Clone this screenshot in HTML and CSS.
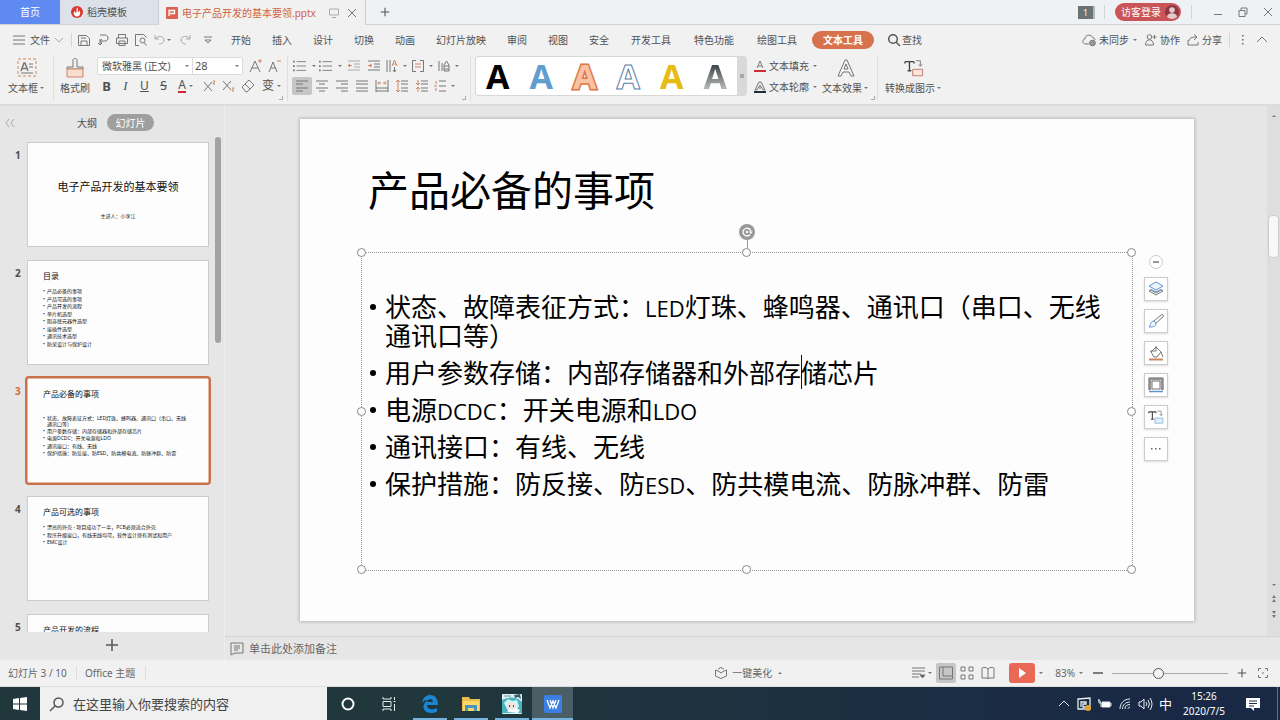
FILE: index.html
```html
<!DOCTYPE html>
<html lang="zh-CN">
<head>
<meta charset="utf-8">
<title>电子产品开发的基本要领.pptx</title>
<link rel="stylesheet" href="styles.css">
</head>
<body>
<svg class="defs" aria-hidden="true">
  <symbol id="caret" viewBox="0 0 6 4"><path d="M1 1h4L3 3z" fill="#777"/></symbol>
  <symbol id="x" viewBox="0 0 10 10"><path d="M1 1l8 8M9 1L1 9"/></symbol>
  <symbol id="plus" viewBox="0 0 14 14"><path d="M7 1v12M1 7h12"/></symbol>
  <symbol id="bullets" viewBox="0 0 16 14"><path d="M4 2h11M4 7h11M4 12h11"/><path d="M0 2h2M0 7h2M0 12h2" stroke-width="2"/></symbol>
  <symbol id="texttool" viewBox="0 0 22 20"><path d="M1 3h10M6 3v10M1 5V3M11 5V3M4 13h4" stroke="#444" stroke-width="1.500"/><path d="M13 2h5v6M16 6l2 2 2-2"/><path class="accent" d="M9.500 11.500h11v7h-11z"/></symbol>
</svg>
<div class="app">
  <header class="tabs">
    <button class="tab tab-home">首页</button>
    <button class="tab tab-docer"><svg class="i12" viewBox="0 0 12 12"><circle cx="6" cy="6" r="6" fill="#d93a2b"/><path d="M6 1.500c2 2 0 3.500 1 4.500 1 0 1-1 1-2 3 4-0 6.500-2 6.500C2 10 2 6 4 5c0 1 0 1.500 1 2 1-1-0-3 1-5.500z" fill="#fff"/></svg>稻壳模板</button>
    <div class="tab tab-file"><svg class="i12" viewBox="0 0 12 12"><rect width="12" height="12" rx="1" fill="#dd6350"/><path d="M3 9V3.500h5.500v3H4" fill="none" stroke="#fff" stroke-width="1.300"/></svg><span class="filename">电子产品开发的基本要领.pptx</span>
      <svg class="i10 line faint" viewBox="0 0 10 10"><path d="M.5 1h9v6h-9zM3 9.500h4"/></svg>
      <button class="plain" aria-label="关闭标签"><svg class="i10 line"><use href="#x"/></svg></button></div>
    <button class="plain newtab" aria-label="新建"><svg class="i10 line strong"><use href="#plus"/></svg></button>
    <div class="window-tools">
      <span class="count">1</span><i class="sep"></i>
      <button class="login">访客登录<svg class="i14" viewBox="0 0 14 14"><circle cx="7" cy="7" r="7" fill="#8b3945"/><circle cx="7" cy="5" r="2.800" fill="#e8c8cd"/><path d="M2 12c0-5 10-5 10 0-3 2.500-7 2.500-10 0z" fill="#e8c8cd"/></svg></button><i class="sep"></i>
      <button class="plain" aria-label="最小化"><svg class="i10 line" viewBox="0 0 10 10"><path d="M1 7.500h8"/></svg></button>
      <button class="plain" aria-label="还原"><svg class="i10 line" viewBox="0 0 10 10"><path d="M1 3.500h6v6H1zM3 3V1h6v6H7.500"/></svg></button>
      <button class="plain" aria-label="关闭"><svg class="i10 line"><use href="#x"/></svg></button>
    </div>
  </header>

  <nav class="menu">
    <button class="file-menu"><svg class="i12 line" viewBox="0 0 12 12"><path d="M0 2h12M0 6h12M0 10h12"/></svg>文件<svg class="i8 line faint" viewBox="0 0 8 8"><path d="M0 2l4 4 4-4"/></svg></button>
    <i class="sep"></i>
    <div class="quick">
      <button aria-label="保存"><svg class="i12 line" viewBox="0 0 12 12"><path d="M.5 10.500v-9h8l3 3v7H.5zM3 4h5M3 11V7h6v4"/></svg></button>
      <button aria-label="输出"><svg class="i12 line" viewBox="0 0 12 12"><path d="M3 1h5c4 0 4 6 0 6H3M3 5v6M1 9l2 2 2-2M5 5L3 7l2 2"/></svg></button>
      <button aria-label="打印"><svg class="i12 line" viewBox="0 0 12 12"><path d="M2.500 4V.5h7V4M.5 4h11v5.500H.5zM3 7h6v4.500H3z"/></svg></button>
      <button aria-label="打印预览"><svg class="i12 line" viewBox="0 0 12 12"><path d="M4 11.500H.5V.5h8l3 3"/><circle cx="7.500" cy="6.500" r="2.500"/><path d="M9 8.500l2.500 3"/></svg></button>
      <button aria-label="撤销"><svg class="i12 line faint" viewBox="0 0 12 12"><path d="M1 1v4h4M1 5c3-4 9-3 9 1 0 3-3 4-5 4"/></svg><svg class="car"><use href="#caret"/></svg></button>
      <button aria-label="重做"><svg class="i12 line faint" viewBox="0 0 12 12"><path d="M11 1v4H7M11 5C8 1 2 2 2 6c0 3 3 4 5 4"/></svg></button>
      <button aria-label="更多"><svg class="i8 line" viewBox="0 0 8 8"><path d="M0 1h8M1 4l3 3 3-3z"/></svg></button>
    </div>
    <div class="menu-a"><button>开始</button><button>插入</button><button>设计</button><button>切换</button><button>动画</button><button>幻灯片放映</button><button>审阅</button><button>视图</button><button>安全</button></div>
    <div class="menu-b"><button>开发工具</button><button>特色功能</button><button>绘图工具</button></div>
    <button class="active-menu">文本工具</button>
    <button class="find"><svg class="i12 line strong" viewBox="0 0 12 12"><circle cx="5" cy="5" r="4.300"/><path d="M8 8l4 4"/></svg>查找</button>
    <div class="menu-right">
      <button><svg class="i14 line" viewBox="0 0 14 14"><path d="M7 11H4C0 11 0 6 3 6c0-5 7-5 8-1 1.500 0 2 1 2 2"/><circle cx="10.500" cy="10" r="2.800" fill="#999"/></svg>未同步<svg class="car"><use href="#caret"/></svg></button>
      <button><svg class="i12 line" viewBox="0 0 12 12"><circle cx="4.500" cy="3" r="2.300"/><path d="M.5 11c0-7 8-7 8 0zM9.500 1v4M7.500 3h4"/></svg>协作</button>
      <button><svg class="i12 line" viewBox="0 0 12 12"><path d="M1 6v5h10V8M2 7c0-3 3-4 7-4M7 .5L10 3 7 6"/></svg>分享</button>
      <i class="sep"></i>
      <button aria-label="更多选项"><svg class="i12" viewBox="0 0 12 12"><path d="M5 1h1.500v1.500H5zM5 5h1.500v1.500H5zM5 9h1.500v1.500H5z" fill="#666"/></svg></button>
      <button aria-label="收起功能区"><svg class="i12 line" viewBox="0 0 12 12"><path d="M1 8l5-5 5 5"/></svg></button>
    </div>
  </nav>

  <section class="ribbon">
    <button class="big"><svg class="i20 line" viewBox="0 0 20 20"><path class="orange" d="M1 1h18v17H1z" stroke-dasharray="3 2"/><path d="M4 13l3-8h1l3 8M5 10.500h5" stroke-width="1.500"/><path d="M12 6h4M12 9h4M4 15h12"/></svg><span>文本框<svg class="car"><use href="#caret"/></svg></span></button>
    <i class="rule"></i>
    <button class="big"><svg class="i20 line" viewBox="0 0 20 20"><path d="M2 11h16M2 11V9h6V2c0-2 4-2 4 0v7h6v2"/><path class="orange tint" d="M2 11h16v8H2z"/></svg><span>格式刷</span></button>
    <div class="font-group">
      <div class="row">
        <div class="combo">
          <label class="pick family"><select aria-label="字体"><option>微软雅黑 (正文)</option></select><svg class="car"><use href="#caret"/></svg></label>
          <label class="pick size"><select aria-label="字号"><option>28</option></select><svg class="car"><use href="#caret"/></svg></label>
        </div>
        <button class="cell" aria-label="增大字号"><svg class="i14 line" viewBox="0 0 14 14"><path d="M1 13L6 2l5 11M3 9h6"/><path class="orange" d="M9 2h4M11 0v4"/></svg></button>
        <button class="cell" aria-label="减小字号"><svg class="i14 line" viewBox="0 0 14 14"><path d="M1 13L5 3l4 10M3 9h5"/><path class="orange" d="M9 2h4"/></svg></button>
      </div>
      <div class="row formats">
        <button class="cell bold">B</button><button class="cell italic">I</button><button class="cell under">U</button><button class="cell strike">S</button>
        <button class="cell wide"><span class="color-a">A</span><svg class="car"><use href="#caret"/></svg></button>
        <button class="cell" aria-label="上标"><svg class="i12 line" viewBox="0 0 12 12"><path d="M1 2l8 9M9 2l-8 9"/><path class="orange" d="M10 1h2L10 4h2"/></svg></button>
        <button class="cell" aria-label="下标"><svg class="i12 line" viewBox="0 0 12 12"><path d="M1 1l8 9M9 1l-8 9"/><path class="orange" d="M10 8h2l-2 3h2"/></svg></button>
        <button class="cell" aria-label="清除格式"><svg class="i14 line" viewBox="0 0 14 14"><path d="M1 8l7-7 5 5-7 7H5zM4 5l5 5"/></svg></button>
        <button class="cell wide" aria-label="拼音"><span class="pinyin">变</span><svg class="car"><use href="#caret"/></svg></button>
      </div>
    </div>
    <span class="corner"></span><i class="rule"></i>
    <div class="para-group">
      <div class="row">
        <button class="cell drop" aria-label="项目符号"><svg class="i14 line"><use href="#bullets"/></svg><svg class="car"><use href="#caret"/></svg></button>
        <button class="cell drop" aria-label="编号"><svg class="i14 line"><use href="#bullets"/></svg><svg class="car"><use href="#caret"/></svg></button>
        <button class="cell" aria-label="减少缩进"><svg class="i12 line faint" viewBox="0 0 12 12"><path d="M0 1h12M6 4h6M6 7h6M0 10h12"/><path class="orange" d="M4 5.500H0M2 4L0 5.500 2 7"/></svg></button>
        <button class="cell" aria-label="增加缩进"><svg class="i12 line" viewBox="0 0 12 12"><path d="M0 1h12M6 4h6M6 7h6M0 10h12"/><path class="orange" d="M0 5.500h4M2 4l2 1.500L2 7"/></svg></button>
        <button class="cell drop" aria-label="文字方向"><svg class="i12 line" viewBox="0 0 12 12"><path d="M1 0v12M4 0v12"/><path class="orange" d="M6 6l2.500-6L11 6M7 4h3"/><path d="M8.500 7v5M7 10l1.500 2 1.500-2"/></svg><svg class="car"><use href="#caret"/></svg></button>
        <button class="cell drop" aria-label="对齐文本"><svg class="i12 line" viewBox="0 0 12 12"><path d="M4 .5H.5v11H4M8 .5h3.500v11H8"/><path class="orange" d="M3 4h6M3 7h6"/></svg><svg class="car"><use href="#caret"/></svg></button>
        <button class="cell drop" aria-label="文字排列"><svg class="i12 line" viewBox="0 0 12 12"><path d="M1 1v10M4 3v8M6 11V5l2.500-4L11 5v6zM6 6h5M6 9h5"/></svg><svg class="car"><use href="#caret"/></svg></button>
      </div>
      <div class="row aligns">
        <button class="cell on" aria-label="左对齐"><svg class="i12 line" viewBox="0 0 12 12"><path d="M0 1h12M0 4h7M0 8h12M0 11h7"/></svg></button>
        <button class="cell" aria-label="居中"><svg class="i12 line" viewBox="0 0 12 12"><path d="M0 1h12M3 4h6M0 8h12M3 11h6"/></svg></button>
        <button class="cell" aria-label="右对齐"><svg class="i12 line" viewBox="0 0 12 12"><path d="M0 1h12M5 4h7M0 8h12M5 11h7"/></svg></button>
        <button class="cell" aria-label="两端对齐"><svg class="i12 line" viewBox="0 0 12 12"><path d="M0 1h12M0 4h12M0 8h12M0 11h12"/></svg></button>
        <button class="cell" aria-label="分散对齐"><svg class="i12 line" viewBox="0 0 12 12"><path d="M0 0v12M12 0v12M0 8h12M0 11h12"/><path class="orange" d="M2 3h3M7 3h3M3 1.500L2 3l1 1.500M9 1.500L10 3 9 4.500"/></svg></button>
        <button class="cell" aria-label="增大行距"><svg class="i12 line" viewBox="0 0 12 12"><path d="M5 1h7M5 4h7M5 8h7M5 11h7"/><path class="orange" d="M2 0v12M0 2l2-2 2 2M0 10l2 2 2-2"/></svg></button>
        <button class="cell" aria-label="减小行距"><svg class="i12 line" viewBox="0 0 12 12"><path d="M5 1h7M5 4h7M5 8h7M5 11h7"/><path class="orange" d="M2 0v4M2 8v4M0 3l2 2 2-2M0 9l2-2 2 2"/></svg></button>
        <button class="cell drop" aria-label="行距"><svg class="i12 line" viewBox="0 0 12 12"><path d="M5 1h7M5 6h7M5 11h7"/><path class="orange" d="M2 1v3M2 8v3M0 6h3"/></svg><svg class="car"><use href="#caret"/></svg></button>
      </div>
    </div>
    <span class="corner"></span><i class="rule"></i>
    <div class="gallery">
      <button class="wa wa-black">A</button><button class="wa wa-blue">A</button><button class="wa wa-orange">A</button><button class="wa wa-line">A</button><button class="wa wa-gold">A</button><button class="wa wa-grey">A</button>
      <button class="gallery-more" aria-label="更多样式"><svg class="i8 line" viewBox="0 0 8 8"><path d="M2 3h4M2 5h4"/></svg></button>
    </div>
    <div class="text-options">
      <button><svg class="i12 line" viewBox="0 0 12 12"><path d="M3 8l3-7 3 7M4 6h4"/><path d="M0 11h12" class="red"/></svg>文本填充<svg class="car"><use href="#caret"/></svg></button>
      <button><svg class="i12 line" viewBox="0 0 12 12"><path d="M1 9l4-8h2l4 8H9L6 4 3 9zM5 7h2"/><path d="M0 11h12" class="dark"/></svg>文本轮廓<svg class="car"><use href="#caret"/></svg></button>
    </div>
    <button class="big effect"><svg class="i20 line" viewBox="0 0 20 20"><path d="M2 18L9 2h2l7 16h-3l-2-4H7l-2 4zM8 11h4l-2-5z"/></svg><span>文本效果<svg class="car"><use href="#caret"/></svg></span></button>
    <span class="corner"></span><i class="rule"></i>
    <button class="big convert"><svg class="i20 line peach"><use href="#texttool"/></svg><span>转换成图示<svg class="car"><use href="#caret"/></svg></span></button>
  </section>

  <main class="work">
    <aside class="side">
      <div class="side-head"><button class="plain" aria-label="折叠"><svg class="i10 line faint" viewBox="0 0 10 10"><path d="M4 1L1 5l3 4M9 1L6 5l3 4"/></svg></button><div class="side-tabs"><button class="outline-tab">大纲</button><button class="slides-tab">幻灯片</button></div></div>
      <div class="side-body">
      <ol class="thumbs">
        <li><span class="num">1</span><div class="thumb cover"><h3>电子产品开发的基本要领</h3><p>主讲人：小李江</p></div></li>
        <li><span class="num">2</span><div class="thumb"><h4>目录</h4><ul><li>产品必备的事项</li><li>产品可选的事项</li><li>产品开发的流程</li><li>单片机选型</li><li>阻容感元器件选型</li><li>接插件选型</li><li>通讯技术选型</li><li>防呆设计与保护设计</li></ul></div></li>
        <li class="current"><span class="num">3</span><div class="thumb roomy"><h4>产品必备的事项</h4><ul><li class="tight">状态、故障表征方式：LED灯珠、蜂鸣器、通讯口（串口、无线<br>通讯口等）</li><li>用户参数存储：内部存储器和外部存储芯片</li><li>电源DCDC：开关电源和LDO</li><li>通讯接口：有线、无线</li><li>保护措施：防反接、防ESD、防共模电流、防脉冲群、防雷</li></ul></div></li>
        <li><span class="num">4</span><div class="thumb"><h4>产品可选的事项</h4><ul><li>漂亮的外壳 - 项目成功了一半，PCB必须适合外壳</li><li>程序升级接口，有线无线均可，软件设计须有测试和用户</li><li>EMC设计</li></ul></div></li>
        <li><span class="num">5</span><div class="thumb"><h4>产品开发的流程</h4></div></li>
      </ol>
      <span class="side-scroll"></span>
      </div>
      <button class="plain add-slide" aria-label="新建幻灯片"><svg class="i14 line strong"><use href="#plus"/></svg></button>
    </aside>

    <div class="editor">
      <div class="stage">
        <article class="slide">
          <h1>产品必备的事项</h1>
          <div class="textbox">
            <ul>
              <li>状态、故障表征方式：<span class="latin">LED</span>灯珠、蜂鸣器、通讯口（串口、无线通讯口等）</li>
              <li>用户参数存储：内部存储器和外部存<span class="ibeam"></span>储芯片</li>
              <li>电源<span class="latin">DCDC</span>：开关电源和<span class="latin">LDO</span></li>
              <li>通讯接口：有线、无线</li>
              <li>保护措施：防反接、防<span class="latin">ESD</span>、防共模电流、防脉冲群、防雷</li>
            </ul>
            <i class="h nw"></i><i class="h n"></i><i class="h ne"></i><i class="h w"></i><i class="h e"></i><i class="h sw"></i><i class="h s"></i><i class="h se"></i>
            <span class="rotate"><svg viewBox="0 0 16 16"><circle cx="8" cy="8" r="8" fill="#999"/><path d="M11 10.500a3.900 3.900 0 1 1 .8-3" fill="none" stroke="#fff" stroke-width="1.300"/><path d="M9.800 7.500h4l-2 2.500z" fill="#fff"/><circle cx="8" cy="8" r="1.200" fill="#fff"/></svg></span>
            <div class="float-tools">
              <button class="fold" aria-label="收起"><svg class="i8 line" viewBox="0 0 8 8"><path d="M1 4h6" stroke-width="1.500"/></svg></button>
              <button aria-label="图层"><svg class="i16 line" viewBox="0 0 16 16"><path d="M1 10l7 4 7-4-2-1-5 3-5-3z"/><path class="blue" d="M1 5l7-4 7 4-7 4zM2 8l6 3 6-3"/></svg></button>
              <button aria-label="格式"><svg class="i16 line" viewBox="0 0 16 16"><path d="M6 8l7-6c2-1 3 0 2 2l-7 6z"/><path class="blue" d="M6 8l2 2c0 4-4 4-7 4 2-2 1-6 5-6z"/></svg></button>
              <button aria-label="填充"><svg class="i16 line" viewBox="0 0 16 16"><path d="M3 7l5-5 5 5-4 5H6zM2 6h6V1M13 7l2 5"/><path class="orange" d="M1 14.500h14" stroke-width="2"/></svg></button>
              <button aria-label="轮廓"><svg class="i16 line" viewBox="0 0 16 16"><path d="M2 13V2h12v11" stroke-width="2.500" stroke="#999"/><path d="M1 13V1h14v12M4 12V4h8v8z"/><path class="blue" d="M1 14.500h14" stroke-width="1.500"/></svg></button>
              <button aria-label="转换"><svg class="i16 line bluebox"><use href="#texttool"/></svg></button>
              <button aria-label="更多"><svg class="i16" viewBox="0 0 16 16"><path d="M3 7h1.500v1.500H3zM7 7h1.500v1.500H7zM11 7h1.500v1.500H11z" fill="#666"/></svg></button>
            </div>
          </div>
        </article>
        <div class="vscroll"><svg class="car up"><use href="#caret"/></svg><span class="grip"></span><div class="vnav"><svg class="car"><use href="#caret"/></svg><svg class="i8" viewBox="0 0 8 8"><path d="M4 0l2 3H2zM4 4l2 3H2z" fill="#777"/></svg><svg class="i8" viewBox="0 0 8 8"><path d="M4 3l2-3H2zM4 7l2-3H2z" fill="#777"/></svg></div></div>
      </div>
      <div class="notes"><svg class="i14 line" viewBox="0 0 14 14"><path d="M1 1h12v10H5l-4 2zM4 4h6M4 6h6M4 8h4"/></svg>单击此处添加备注</div>
    </div>
  </main>

  <footer class="status">
    <span class="s1">幻灯片 3 / 10</span><span class="s2">Office 主题</span>
    <button class="beautify"><svg class="i12 line" viewBox="0 0 12 12"><path d="M.5 3L4 4.500 6 6l2-1.500L11.500 3v6L6 11.500.5 9zM3 2l3-1.500L9 2"/></svg>一键美化<svg class="car up"><use href="#caret"/></svg></button>
    <div class="view-tools">
      <button class="v" aria-label="备注"><svg class="i14 line" viewBox="0 0 14 14"><path d="M0 2h13M0 5h13M0 8h9M0 11h7"/><path d="M8 9h5l-2.500 3z" fill="#555"/></svg></button><svg class="car"><use href="#caret"/></svg>
      <button class="v on" aria-label="普通视图"><svg class="i14 line" viewBox="0 0 14 14"><path d="M.5 1h13v12H.5zM4 1v9M4 10h9.500"/></svg></button>
      <button class="v" aria-label="浏览视图"><svg class="i14 line" viewBox="0 0 14 14"><path d="M1 1h4v4H1zM9 1h4v4H9zM1 9h4v4H1zM9 9h4v4H9z"/></svg></button>
      <button class="v" aria-label="阅读视图"><svg class="i14 line" viewBox="0 0 14 14"><path d="M7 3C5 1 3 1 1 2v10h5l1 1 1-1h5V2c-2-1-4-1-6 1zM7 3v9"/></svg></button>
      <button class="play" aria-label="播放"><svg class="i12" viewBox="0 0 12 12"><path d="M3 1l7 5-7 5z" fill="#fff"/></svg></button><svg class="car"><use href="#caret"/></svg>
      <span class="zoom">83%</span><svg class="car"><use href="#caret"/></svg>
      <button class="minus" aria-label="缩小"><svg class="i10 line strong" viewBox="0 0 10 10"><path d="M0 5h10"/></svg></button>
      <input class="zoom-range" type="range" aria-label="缩放" min="0" max="100" value="39">
      <button class="zin" aria-label="放大"><svg class="i10 line strong"><use href="#plus"/></svg></button>
      <button class="fit" aria-label="适应窗口"><svg class="i10 line" viewBox="0 0 10 10"><path d="M.5 3V.5H3M7 .5h2.500V3M9.500 7v2.500H7M3 9.500H.5V7M4 5h2"/></svg></button>
    </div>
  </footer>

  <div class="taskbar">
    <button class="start" aria-label="开始"><svg class="i14" viewBox="0 0 14 14"><path d="M0 2l6-1v5.500H0zM7 1l7-1v6.500H7zM0 7.500h6V13l-6-1zM7 7.500h7V14l-7-1z" fill="#fff"/></svg></button>
    <label class="search"><svg class="i14 line strong" viewBox="0 0 14 14"><circle cx="8.500" cy="5.500" r="4.500"/><path d="M5 9l-5 5"/></svg><input type="text" aria-label="搜索" placeholder="在这里输入你要搜索的内容"></label>
    <button class="app-btn" aria-label="Cortana"><svg class="i14" viewBox="0 0 14 14"><circle cx="7" cy="7" r="5.500" fill="none" stroke="#fff" stroke-width="2"/></svg></button>
    <button class="app-btn" aria-label="任务视图"><svg class="i14" viewBox="0 0 14 14"><path d="M1 0v2h8V0M1 4.500h8v5H1zM1 14v-2h8v2M12.500 0v3M12.500 7v7M11.500 4.500h2" fill="none" stroke="#e8eeee"/></svg></button>
    <button class="app-btn run" aria-label="Edge"><svg class="i18" viewBox="0 0 18 18"><path d="M1 8C2 2 6 0 9 0c6 0 8 5 8 10H6c0 5 6 5 10 3v3.500C9 20 2 17 2.500 11 3 8 5 6 7 5c-3 0-5 1-6 3zm5-1h6c0-4-5-4-6 0z" fill="#1b87d4"/></svg></button>
    <button class="app-btn run" aria-label="文件资源管理器"><svg class="i18" viewBox="0 0 18 18"><path d="M0 2h7l1 2h10v12H0z" fill="#e9bd48"/><path d="M1 6h16v10H1z" fill="#f8d867"/><path d="M3 16v-6h12v6h-3v-3H6v3z" fill="#4b94bd"/></svg></button>
    <button class="app-btn run" aria-label="游戏"><svg class="i20" viewBox="0 0 20 20"><rect width="20" height="20" rx="1" fill="#dff1f1"/><path d="M0 6c5-3 14-4 20 2v11H0z" fill="#45b4be"/><path d="M12 1l6-1 1 5-3-2-3 1z" fill="#365e70"/><path d="M2 9l4-4 4 2 5-1 2 6-3 5H6z" fill="#d7f1f3"/><ellipse cx="9" cy="12" rx="4" ry="3" fill="#f2e2dc"/><path d="M7 11h1v2H7zM11 11h1v2h-1z" fill="#34505c"/><path d="M5 18l3-3 3 1 3-2 4 2-2 3z" fill="#fff"/><path d="M2 2h7" stroke="#709797"/></svg></button>
    <button class="app-btn run selected" aria-label="WPS"><svg class="i18" viewBox="0 0 18 18"><rect width="18" height="18" rx="2" fill="#3c7fe4"/><path d="M3 5l3 8 3-7 3 7 3-8M6 5l3 8 3-8" fill="none" stroke="#fff" stroke-width="1.300"/></svg></button>
    <div class="tray">
      <svg class="i12 white" viewBox="0 0 12 12"><path d="M1 8l5-5 5 5"/></svg>
      <svg class="i14 white" viewBox="0 0 14 14"><path d="M1 2l12-1v11H1zM4 10V5h5v2H6v3h3" stroke-width="1.300"/><circle cx="11" cy="11" r="3" fill="#e5a52f" stroke="none"/></svg>
      <svg class="i14 white" viewBox="0 0 14 14"><path d="M4 5h8v5H4z" fill="#fff"/><path d="M13 6v3M0 3l3 2M1 2v4h2v4"/></svg>
      <svg class="i12 white" viewBox="0 0 12 12"><path d="M1 11C1 5 5 1 11 1M3.500 11c0-4 3-7 7.500-7M6 11c0-3 2-4.500 5-4.500M9 11c0-1 1-2 2-2"/></svg>
      <svg class="i14 white" viewBox="0 0 14 14"><path d="M1 5h2l3-3v10L3 9H1zM8 5q2 2 0 4M10 3q3 4 0 8M12 1q4 6 0 12"/></svg>
      <span class="ime">中</span>
      <time>15:26<br>2020/7/5</time>
      <svg class="i14 note-icon" viewBox="0 0 14 14"><path d="M0 1h14v10H8v3l-3-3H0z" fill="#fff"/><path d="M3 4h8M3 6.500h8M3 9h5" stroke="#1d2c43"/></svg>
      <i class="desktop-edge"></i>
    </div>
  </div>
</div>
</body>
</html>
```
FILE: styles.css
```css
* { box-sizing: border-box; }
body { margin: 0; font: 10px/14px "Noto Sans", "Noto Sans CJK SC", sans-serif; color: #505050; }
button, input, select { font: inherit; color: inherit; }
button { border: 0; background: none; padding: 0; display: flex; align-items: center; justify-content: center; white-space: nowrap; }
ul, ol, h1, h3, h4, p { margin: 0; padding: 0; list-style: none; font-weight: 400; }
svg { display: block; flex: none; overflow: visible; }
.defs { position: absolute; width: 0; height: 0; }
.app { height: 100vh; display: flex; flex-direction: column; background: #f1f1f1; overflow: hidden; }

.i8 { width: 8px; height: 8px; }
.i10 { width: 10px; height: 10px; }
.i12 { width: 12px; height: 12px; }
.i14 { width: 14px; height: 14px; }
.i16 { width: 16px; height: 16px; }
.i18 { width: 18px; height: 18px; }
.i20 { width: 20px; height: 20px; }
.car { width: 6px; height: 4px; }
.up { transform: rotate(180deg); }
.line { fill: none; stroke: #777; }
.line.faint { stroke: #aaa; }
.line.strong { stroke: #555; stroke-width: 1.5; }
.line .orange { stroke: #cf8563; }
.line .tint { fill: #f7ded1; }
.line .blue { stroke: #6293cf; fill: #edf4fc; }
.line .red { stroke: #d02a35; stroke-width: 2; }
.line .dark { stroke: #222b38; stroke-width: 2; }
.peach { --fill: #fbe5da; --edge: #b9796a; }
.bluebox { --fill: #e2effc; --edge: #78a8d8; }
.accent { fill: var(--fill); stroke: var(--edge); }
.white { fill: none; stroke: #e8eef0; }
.sep { width: 1px; height: 14px; background: #d2d6d8; }

/* document tabs */
.tabs { height: 25px; flex: none; display: flex; background: #eef2f4; border-bottom: 1px solid #ccd5da; }
.tab { height: 25px; display: flex; align-items: center; gap: 4px; }
.tab-home { width: 60px; height: 24px; background: #5f8af2; color: #fff; }
.tab-docer { width: 98px; background: #dde2ea; justify-content: flex-start; padding-left: 11px; height: 24px; }
.tab-file { width: 208px; background: #f1f1f1; border: solid #c5cdd3; border-width: 0 1px; padding: 0 8px 0 7px; color: #cf6346; }
.filename { flex: 1; white-space: nowrap; }
.tab-file .plain { margin-left: 4px; }
.newtab { width: 37px; }
.window-tools { margin-left: auto; display: flex; align-items: center; gap: 14px; padding-right: 7px; }
.count { width: 17px; height: 13px; margin-right: -5px; border-right: 2px solid #b3b8ba; background: #6b7273; color: #eee; text-align: center; font-size: 9px; line-height: 13px; }
.login { height: 18px; padding: 0 2px 0 6px; margin: 0 -4px; gap: 4px; border-radius: 9px; background: #c95558; color: #fff; }
.window-tools .plain { margin-left: 1px; }
.window-tools .sep + .plain { margin-left: 7px; }

/* menu line */
.menu { height: 30px; flex: none; display: flex; align-items: center; white-space: nowrap; }
.file-menu { gap: 5px; margin-left: 13px; width: 50px; justify-content: flex-start; }
.menu > .sep { margin: 0 6px 0 8px; }
.quick { display: flex; align-items: center; gap: 7px; }
.quick button:last-child { margin-left: 6px; }
.menu-a { display: flex; gap: 21px; margin-left: 19px; }
.menu-b { display: flex; gap: 23px; margin-left: 22px; }
.active-menu { height: 18px; padding: 0 11px; margin-left: 15px; border-radius: 9px; background: #d8714d; color: #fff; font-weight: 700; }
.find { margin-left: 14px; gap: 2px; }
.menu-right { margin-left: auto; display: flex; align-items: center; gap: 7px; padding-right: 12px; }
.menu-right button { gap: 3px; }

/* ribbon */
.ribbon { height: 51px; flex: none; display: flex; align-items: stretch; padding-left: 8px; border-bottom: 2px solid #dcdcdc; }
.big { flex-direction: column; justify-content: flex-start; gap: 3px; padding-top: 3px; }
.big span { display: flex; align-items: center; gap: 1px; }
.rule { width: 1px; margin: 1px 0 3px; background: #dedede; }
.big + .rule { margin-left: 8px; margin-right: 6px; }
.font-group { margin-left: 7px; width: 190px; padding-top: 1px; }
.row { display: flex; align-items: center; height: 20px; }
.combo { display: flex; width: 146px; height: 18px; border: 1px solid #dbdbdb; border-radius: 2px; background: #fff; margin-right: 3px; }
.pick { display: flex; align-items: center; padding-right: 2px; }
.family { width: 95px; border-right: 1px solid #dbdbdb; }
.size { flex: 1; }
.pick select { appearance: none; border: 0; background: none; flex: 1; min-width: 0; height: 16px; padding: 0 0 0 4px; font-size: 10px; }
.size select { font-size: 11px; padding-left: 2px; }
.cell { width: 19px; height: 18px; flex: none; }
.cell.wide { width: 26px; gap: 2px; }
.formats .cell:nth-last-child(2) { width: 22px; }
.cell.drop { width: 26px; gap: 4px; }
.cell.on, .v.on { background: #c6c6c6; border-radius: 2px; }
.bold { font: 700 13px "Noto Sans", sans-serif; }
.italic { font: italic 13px "Liberation Serif", serif; }
.under { font-size: 12px; text-decoration: underline; }
.strike { font-size: 12px; text-decoration: line-through; }
.color-a { font-size: 12px; line-height: 12px; border-bottom: 2px solid #d02a35; }
.pinyin { font-size: 12px; }
.corner { align-self: flex-end; width: 4px; height: 4px; margin: 0 4px 4px -8px; border: solid #aaa; border-width: 0 1px 1px 0; }
.para-group { margin-left: 4px; width: 178px; padding-top: 1px; }
.para-group .row:first-child .cell { width: 20px; }
.para-group .row:first-child .drop { width: 26px; }
.aligns .cell { width: 20px; }
.aligns .cell.drop { width: 26px; }
.gallery { margin: 1px 0 8px 4px; width: 272px; display: flex; background: #fff; border: 1px solid #d8d8d8; border-radius: 3px; }
.wa { flex: 1; font: 700 34px/40px "Open Sans", sans-serif; }
.wa-black { color: #000; }
.wa-blue { color: #639dcf; }
.wa-orange { color: #f9c3a3; -webkit-text-stroke: 3px #dc7447; paint-order: stroke fill; }
.wa-line { color: #fff; -webkit-text-stroke: 1px #5c7dac; }
.wa-gold { color: #e6bb13; }
.wa-grey { background: linear-gradient(#444b4c 25%, #b2b4b4 80%); -webkit-background-clip: text; background-clip: text; color: transparent; }
.gallery-more { width: 9px; background: #d9d9d9; border-radius: 0 2px 2px 0; }
.text-options { display: flex; flex-direction: column; gap: 7px; padding-top: 4px; margin-left: 7px; }
.text-options button { gap: 3px; }
.effect { margin: 0 6px 0 4px; }
.effect + .corner { margin-left: -4px; margin-right: 2px; }
.convert { margin-left: 7px; }

/* workspace */
.work { flex: 1; min-height: 0; display: flex; background: #e6e6e6; }
.side { width: 225px; flex: none; display: flex; flex-direction: column; border-right: 1px solid #ededed; }
.side-head { height: 31px; flex: none; display: flex; align-items: center; padding: 2px 0 0 5px; }
.side-tabs { display: flex; align-items: center; gap: 10px; margin-left: 62px; }
.slides-tab { width: 47px; height: 17px; border-radius: 9px; background: #9f9f9f; color: #fff; }
.side-body { flex: 1; min-height: 0; display: flex; }
.thumbs { flex: 1; overflow: hidden; padding: 5px 0 0 13px; display: flex; flex-direction: column; gap: 13px; }
.thumbs > li { display: flex; gap: 4px; flex: none; }
.num { width: 10px; padding: 6px 0 0 2px; font-weight: 700; }
.thumb { width: 182px; height: 105px; flex: none; border: 1px solid #cbcbcb; background: #fdfdfd; padding: 8px 15px 0; color: #111; }
.thumb h4 { font-size: 8px; line-height: 13px; }
.thumb ul { padding-top: 6px; font-size: 5px; }
.thumb ul li { padding-left: 4px; text-indent: -4px; line-height: 7px; margin-bottom: 1px; white-space: nowrap; }
.thumb ul li:nth-child(even) { margin-bottom: 0; }
.thumb ul li::before { content: "•"; display: inline-block; width: 4px; text-indent: 0; }
.thumb ul .tight { line-height: 6px; }
.roomy ul { padding-top: 15px; }
.current .thumb { box-shadow: 0 0 0 2px #c8714c; border-color: #e6b8a2; border-radius: 2px; }
.current .num { color: #d06a41; }
.cover { text-align: center; padding: 35px 0 0; }
.cover h3 { font-size: 11px; line-height: 18px; }
.cover p { font-size: 5px; line-height: 8px; padding-top: 16px; }
.side-scroll { width: 6px; height: 206px; border-radius: 3px; background: #a3a3a3; margin-right: 3px; }
.add-slide { height: 28px; padding-bottom: 2px; flex: none; }

.editor { flex: 1; min-width: 0; display: flex; flex-direction: column; }
.stage { flex: 1; min-height: 0; display: flex; padding: 13px 0 15px 75px; }
.slide { flex: 1; min-width: 0; background: #fdfdfd; box-shadow: 0 0 3px 1px #b9b9b9; padding: 40px 61px 50px 61px; color: #000; display: flex; flex-direction: column; font-family: "Noto Sans CJK SC", sans-serif; }
.slide h1 { font-size: 41px; line-height: 58px; padding-left: 7px; }
.textbox { position: relative; flex: 1; margin-top: 35px; border: 1px dotted #999; padding: 38px 8px 0 7px; }
.textbox ul { display: flex; flex-direction: column; gap: 8px; }
.textbox li { position: relative; padding-left: 16px; font-size: 26px; line-height: 29px; }
.textbox li::before { content: ""; position: absolute; left: 1px; top: 13px; width: 6px; height: 6px; border-radius: 50%; background: #000; }
.latin { font: 22px/20px "Open Sans", sans-serif; }
.ibeam { position: relative; }
.ibeam::after { content: ""; position: absolute; left: 0; top: 2px; width: 1px; height: 34px; background: #111; }
.h { position: absolute; width: 9px; height: 9px; margin: -5px; border: 1px solid #888; border-radius: 50%; background: #fff; }
.nw, .w, .sw { left: 0; }
.n, .s { left: 50%; }
.ne, .e, .se { left: 100%; }
.nw, .n, .ne { top: 0; }
.w, .e { top: 50%; }
.sw, .s, .se { top: 100%; }
.rotate { position: absolute; left: 50%; top: -29px; width: 16px; height: 24px; margin-left: -8px; background: linear-gradient(#999, #999) center / 1px 100% no-repeat; }
.float-tools { position: absolute; left: 100%; top: 2px; margin-left: 12px; width: 24px; display: flex; flex-direction: column; gap: 8px; align-items: center; }
.float-tools button { width: 24px; height: 24px; background: #fff; border: 1px solid #ccc; box-shadow: 0 1px 2px #ddd; }
.float-tools .fold { width: 14px; height: 14px; border-radius: 50%; box-shadow: none; }
.vscroll { width: 13px; margin: -13px 0 -15px 73px; background: #dedede; display: flex; flex-direction: column; align-items: center; padding: 8px 0 17px; }
.grip { width: 11px; height: 43px; margin-top: 97px; border: 1px solid #ccc; border-radius: 4px; background: #f8f8f8; }
.vnav { margin-top: auto; display: flex; flex-direction: column; align-items: center; gap: 8px; }
.notes { height: 24px; flex: none; display: flex; align-items: center; gap: 5px; padding-left: 5px; border-top: 1px solid #d2d2d2; font-size: 11px; color: #666; }

/* status line */
.status { height: 27px; flex: none; display: flex; align-items: center; color: #666; border-bottom: 1px solid #ddd; white-space: nowrap; }
.s1 { width: 77px; padding-left: 8px; border-right: 1px solid #ddd; }
.s2 { width: 69px; padding-left: 8px; border-right: 1px solid #ddd; }
.beautify { margin-left: auto; gap: 5px; }
.view-tools { display: flex; align-items: center; margin-left: 128px; padding-right: 12px; }
.v { width: 20px; height: 20px; margin-left: 1px; }
.view-tools .car + .v { margin-left: 3px; }
.v:first-child { width: 16px; margin-left: 0; }
.play { width: 26px; height: 20px; margin: 0 3px 0 11px; border-radius: 3px; background: #e96856; }
.zoom { margin: 0 3px 0 11px; }
.minus { margin: 0 9px; }
.zoom-range { appearance: none; width: 116px; height: 12px; margin: 0 9px 0 0; background: linear-gradient(#aaa, #aaa) center / 100% 1px no-repeat; }
.zoom-range::-webkit-slider-thumb { appearance: none; width: 11px; height: 11px; border: 1px solid #555; border-radius: 50%; background: #f5f5f5; }
.fit { margin-left: 11px; }

/* system bar */
.taskbar { height: 33px; flex: none; display: flex; background: linear-gradient(90deg, #20373c 35%, #192945 90%); color: #fff; }
.start { width: 40px; }
.search { width: 287px; display: flex; align-items: center; gap: 9px; padding-left: 10px; background: #f0f0f0; color: #333; font-size: 13px; }
.search input { border: 0; background: none; padding: 0; flex: 1; outline: 0; }
.search input::placeholder { color: #444; }
.app-btn { width: 41px; }
.run { background: linear-gradient(#76b4df, #76b4df) center bottom / 34px 2px no-repeat; }
.selected { background-color: #4b5e66; background-size: 100% 2px; }
.tray { margin-left: auto; display: flex; align-items: center; gap: 7px; }
.ime { font-size: 13px; }
time { text-align: center; font-size: 10px; line-height: 15px; width: 46px; margin: 0 12px 0 2px; }
.desktop-edge { width: 1px; align-self: stretch; margin: 0 2px 0 10px; background: #65708a; }
```
